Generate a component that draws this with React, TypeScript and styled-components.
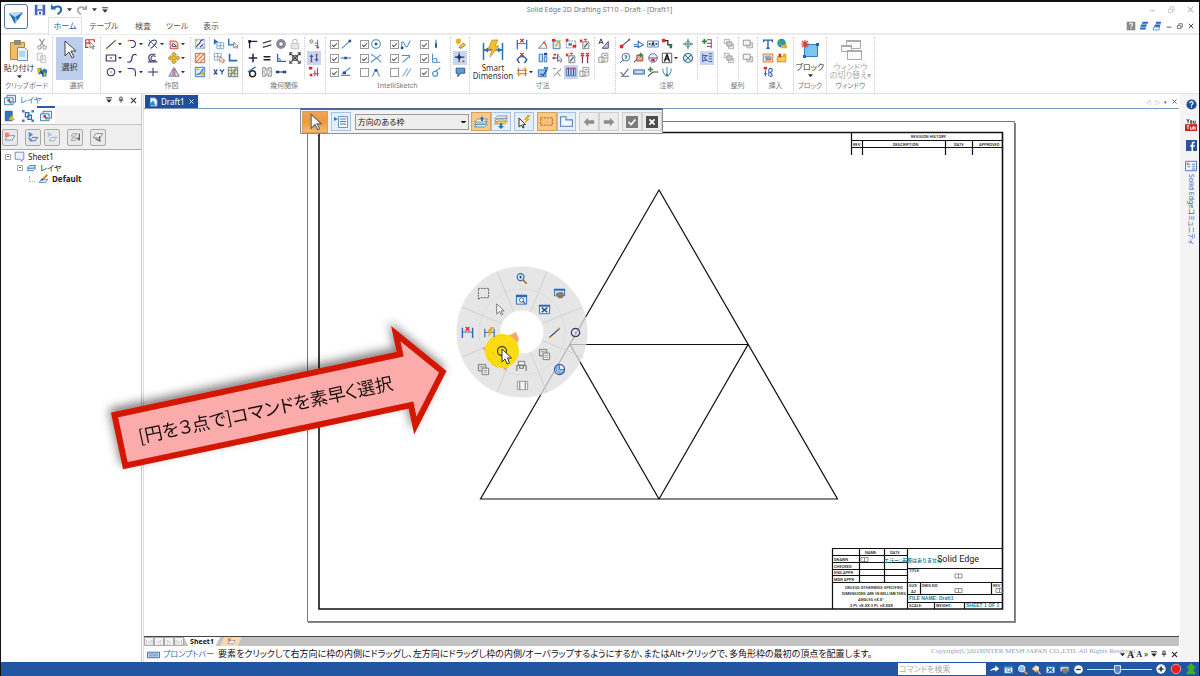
import React, { ReactNode } from "react";
import styled, { createGlobalStyle, css } from "styled-components";

const Global = createGlobalStyle`
  *, *::before, *::after { box-sizing: border-box; }
  html, body, #root { margin: 0; height: 100%; }
  body {
    font-family: "Noto Sans", "Noto Sans CJK JP", sans-serif;
    font-size: 8px;
    line-height: 12px;
    color: #333;
    background: #fff;
    font-feature-settings: "palt";
    overflow: hidden;
  }
  button, input, select { font: inherit; color: inherit; margin: 0; }
  svg { display: block; flex: none; }
`;

/* ---------- icons, all on a 14 x 14 grid ---------- */

const NAVY = "#34346e";
const BLUE = "#2a6cb8";
const RED = "#dc2b20";
const GRAY = "#9a9a9a";
const GOLD = "#e8b21c";

type LineProps = { d: string; c?: string; w?: number; f?: string };
const L = ({ d, c = NAVY, w = 1.2, f = "none" }: LineProps) => <path d={d} stroke={c} strokeWidth={w} fill={f} />;
const F = ({ d, c = NAVY }: { d: string; c?: string }) => <path d={d} fill={c} />;

const dimension = (
  <>
    <L d="M1.500 2v11M12.500 2v11" c={BLUE} w={1.5} />
    <L d="M2 6.500h10" c={BLUE} w={1} />
    <L d="M5 1l4 4M9 1L5 5" c={RED} w={1.5} />
  </>
);
const circle = <><L d="M7 2.500a4.500 4.500 0 1 0 .01 0z" /><F d="M6.200 6.200h1.600v1.600H6.200z" c="#b77" /></>;
const cursor = <path d="M4 1v11l3-3 2 4 1.500-.7L8.600 8.500H12z" fill="#fff" stroke="#666" strokeWidth=".9" />;
const fit = <><path d="M1.500 2.500h11v9h-11z" fill="#eaf4ff" stroke={BLUE} /><L d="M4 5l6 5M10 5l-6 5" c="#244f91" w={1.6} /><F d="M1 2h12v2H1z" c={BLUE} /></>;
const magnifier = <><circle cx="6" cy="5.500" r="3.700" fill="#d7ecfb" stroke={BLUE} strokeWidth="1.300" /><L d="M8.500 8.500l4 4" c="#b4762b" w={2} /><L d="M4.500 5.500h3M6 4v3" c={NAVY} w={1} /></>;
const zoomArea = <><path d="M1.500 2.500h11v9.500h-11z" fill="#d9ecfb" stroke={BLUE} /><F d="M1 2h12v2.500H1z" c={BLUE} /><circle cx="7" cy="7.500" r="2.200" fill="#fff" stroke={BLUE} /><L d="M8.600 9l2.400 2.400" c="#244f91" /></>;
const pan = <><path d="M1.500 2.500h11v7h-11z" fill="#d9ecfb" stroke={BLUE} /><F d="M1 2h12v2H1z" c={BLUE} /><F d="M4 6l6-1 2 3-2 4H6L3 8z" c="#8a7a68" /></>;
const layers = <><path d="M1.500 11l3-3.500h8l-3 3.500z" fill="#fff" stroke={BLUE} /><path d="M1.500 8l3-3.500h8l-3 3.500z" fill="#cfe3f7" stroke={BLUE} /></>;

const glyphs: Record<string, ReactNode> = {
  cut: <><L d="M4 1l5 8M10 1L5 9" c={GRAY} w={1.5} /><L d="M4 9a2 2 0 1 0 .1 0zM10 9a2 2 0 1 0 .1 0z" c={GRAY} /></>,
  copy: <><path d="M1.500 1.500h6v8h-6zM5.500 4.500h6v8h-6z" fill="#f6f6f6" stroke="#bbb" /><L d="M7 7h3M7 9h3" c="#ccc" w={1} /></>,
  formatPaint: <><F d="M2 3l4-1 1 3 3-2 3 2-1 7-4 1-2-4-3 1z" c="#2a79c4" /><F d="M1 2l4 1 1 4-4 1zM9 7l3 2-3 4z" c={GOLD} /><L d="M5 6l3 3" c="#12365f" /></>,
  selectTool: <><L d="M2 2h6M2 2v9h3M12 5V2H8M2 6h5M6 2v4" c={RED} w={1.3} /><path d="M7 5v7l2-2 1.500 3 1-.5L10 10h2.500z" fill="#fff" stroke="#555" strokeWidth=".8" /></>,
  line: <><L d="M2 12L12 3" /><F d="M1 11h2v2H1zM11 2h2v2h-2z" c="#e08a2c" /></>,
  rect: <><path d="M1.500 3.500h11v7h-11z" fill="#fff" stroke={NAVY} strokeWidth="1.300" /><F d="M6 6h2v2H6z" c={RED} /></>,
  circle,
  arc: <><L d="M4 3h3a4 4 0 0 1 0 8H6" /><F d="M2 2h2v2H2z" c="#e08a2c" /></>,
  curve: <L d="M2 11c0 2 5 1 5-4S12 2 12 4" w={1.4} />,
  fillet: <><L d="M2 3h9v9" c="#a9a9c4" w={1} /><L d="M2 3h4a5 5 0 0 1 5 5v4" /></>,
  trim: <><L d="M2 10c0-8 9-9 9-6s-6 8-7 8" /><L d="M2 2l10 10" c={RED} w={1} /></>,
  offset: <><L d="M12 11.500H1" w={1.4} /><L d="M5 11a4.500 4.500 0 0 1 0-8.500h5M10 9a3 3 0 1 1 0-3.500" w={1.2} /></>,
  cross: <L d="M7 2v10M1 7h12" />,
  scale: <><path d="M2.500 12.500v-9h5a4 4 0 0 1 4 5v4z" fill="#fbd6d0" stroke={RED} /><path d="M5 10V7h2l3 3z" fill="#fff" stroke={NAVY} /></>,
  move: <path d="M7 0l3 3H8.500v2.500H11V4l3 3-3 3V8.500H8.500V11H10l-3 3-3-3h1.500V8.500H3V10L0 7l3-3v1.500h2.500V3H4z" fill="#e5b92c" stroke="#8e6c18" strokeWidth=".6" />,
  mirror: <><path d="M6 3v9H1z" fill="#b6cdf0" stroke="#4b69a8" strokeWidth=".8" /><path d="M8 3v9h5z" fill="#dcdcec" stroke="#4b4b80" strokeWidth=".8" /><L d="M7 1v12" c={RED} w={0.8} /></>,
  distribute: <><path d="M1.500 1.500h11v11h-11z" fill="#e6effa" stroke="#8fb1d9" /><L d="M3 11c0-5 3-2 4-6s3-2 4-3M7 11l4-4" /><F d="M2 2h2v2H2zM10 10h2v2h-2z" c={GOLD} /></>,
  hatch: <><path d="M1.500 1.500h11v11h-11z" fill="#ffe7d6" stroke="#97624a" /><L d="M2 7l5-5M2 12L12 2M7 12l5-5" c="#e0704a" /></>,
  tilePaint: <><path d="M1.500 1.500h11v11h-11z" fill="#dcefff" stroke={BLUE} /><L d="M3 10l4-1 4-6" w={1.6} c="#2a79c4" /><F d="M8 7l4-1v5H8zM3 3h3v2H3z" c={GOLD} /></>,
  gridPlay: <><F d="M1 1l5 3.500L1 8z" c={BLUE} /><L d="M4.500 5.500h8v7h-8zM8.500 5.500v7M4.500 9h8" c="#6f9dd4" w={1} /></>,
  gridPick: <><L d="M1.500 1.500h8v8h-8zM5.500 1.500v8M1.500 5.500h8" c="#8d9cb8" w={1} /><path d="M8 6v6l2-2 1 3 2-1-1-2h2z" fill="#fff" stroke="#b06040" strokeWidth=".8" /></>,
  xy: <L d="M1 4l4 6M5 4l-4 6M8 4l2.500 3L13 4M10.500 7v3" c="#2c4f9e" w={1.4} />,
  snapPick: <><L d="M2 1v7h6" c={BLUE} w={1.6} /><path d="M8 5v7l2-2 1 2 1.500-.6L11.500 9.500H13z" fill="#fff" stroke="#555" strokeWidth=".8" /></>,
  corner: <L d="M3 2v8h9" c={BLUE} w={2} />,
  gridEdit: <><path d="M1.500 1.500h11v11h-11z" fill="#f7f0c8" stroke="#4a628b" /><L d="M5 2v10M9 2v10M2 5h10M2 9h10" c="#5f83b5" w={1} /><L d="M4 11l7-8" c="#b98a28" w={1.6} /></>,
  connect: <><L d="M3 12V4h9" c="#24244a" w={1.5} /><F d="M1.500 2.500h3v3h-3z" c="#111" /></>,
  parallel: <L d="M2 6l10-3M2 11l10-3" c="#444" w={1.5} />,
  ring: <><circle cx="7" cy="7" r="4.200" fill="none" stroke="#8b8ba0" strokeWidth="3" /><circle cx="7" cy="7" r="2.600" fill="none" stroke="#55556f" strokeWidth=".8" /></>,
  lock: <><path d="M2.500 6.500h9v6h-9z" fill="#e9e9e9" stroke="#bbb" /><L d="M4.500 6V4a2.500 2.500 0 0 1 5 0v2" c="#bbb" /></>,
  plus: <L d="M7 2v10M2 7h10" w={1.8} c="#24244a" />,
  equal: <L d="M3 5.500h8M3 9h8" w={1.8} c="#222" />,
  perp: <><L d="M3 2v9h10" c={BLUE} w={1.5} /><L d="M3 8h3v3" c={BLUE} w={1} /></>,
  rigid: <><path d="M4 4h6v6H4z" fill="#aaa" stroke="#555" /><L d="M1 1l12 12M13 1L1 13M1 4V1h3M10 1h3v3M1 10v3h3M10 13h3v-3" c="#444" /></>,
  tangent: <><circle cx="6.500" cy="9" r="3.500" fill="none" stroke="#222" strokeWidth="1.700" /><L d="M1 7l9-6" c={BLUE} w={1.5} /></>,
  symmetric: <><L d="M2 2h3v3L3 7l2 2v3H2zM12 2H9v3l2 2-2 2v3h3z" c="#777" w={1} /><L d="M7 2v10" c="#777" w={1} /></>,
  colinear: <><F d="M1 5.500h4v3H1zM9 5.500h4v3H9z" c="#223a86" /><L d="M1 7h12" c="#223a86" /></>,
  relate1: <><circle cx="4" cy="4" r="2" fill="#eed46a" stroke="#888" /><L d="M8 9h4M8 6h4M11 2v10" c={BLUE} w={1} /><F d="M10 10h3v2h-3z" c={RED} /></>,
  relate2: <><L d="M4 3v8M10 3v8M2 5h4M8 9h4" c="#5b4f9c" w={1.4} /><F d="M3 10h2v2H3zM9 2h2v2H9z" c={RED} /></>,
  relate3: <><F d="M1 1h4v3H1zM2 9h3v3H2z" c={RED} /><L d="M8 5v7M11 2v10M6 9h7" c="#b04a74" w={1.3} /></>,
  sLine: <><L d="M2 12l9-8" c="#4c8bd0" /><F d="M10 2h3v3h-3z" c="#244f91" /></>,
  sMid: <><L d="M1 7h12" c="#4c8bd0" w={1.5} /><F d="M5 5.500h3v3H5z" c="#244f91" /></>,
  sPoint: <><L d="M1 11h11M4 8l8-6" c="#4c8bd0" w={1.3} /><F d="M3 6.500h4v3H3z" c="#244f91" /></>,
  sCenter: <><circle cx="7" cy="7" r="5" fill="none" stroke="#3e86c8" strokeWidth="1.200" /><F d="M5.500 5.500h3v3h-3z" c="#244f91" /></>,
  sInter: <L d="M1 3c4 1 7 4 12 9M1 12l12-9" c="#4c8bd0" />,
  sPeak: <><L d="M2 12c3 0 2-7 5-7s2 7 5 7" c="#4c8bd0" /><F d="M5.500 3.500h3v3h-3z" c="#244f91" /></>,
  sSpline: <><L d="M2 12V5c3-3 4 9 7 4l3-6" c="#4c8bd0" /><F d="M1 10h3v3H1z" c="#244f91" /></>,
  sExtend: <L d="M3 12l8-7M2 4h9v3" c="#4c8bd0" />,
  sParallel: <L d="M3 12l6-9M7 12l6-9" c="#7f9fc5" />,
  sHV: <><L d="M7 2v10" c="#4c8bd0" w={1.5} /><F d="M6 6h2v5H6z" c="#244f91" /></>,
  sPerp: <L d="M3 2v10h9M3 8h5v4" c="#4c8bd0" />,
  sTangent: <><circle cx="6" cy="9" r="3" fill="none" stroke="#3e86c8" strokeWidth="1.200" /><L d="M7 6l5-4" c="#3e86c8" /></>,
  bulb: <><F d="M3 1h5v4L5 8 2 5z" c={GOLD} /><L d="M6 11l5-5 2 2-5 4z" c="#b08b22" f="#f2d670" /></>,
  snap: <><L d="M6 1v11M1 6h11" c="#223a66" w={1.3} /><F d="M6 3l3 3-3 3-3-3z" c="#223a66" /><F d="M10 10h2v2h-2z" c={RED} /></>,
  flag: <><path d="M2.500 2.500h10v6h-5l-3 4v-4h-2z" fill="#5f9ad4" stroke="#224f85" /></>,
  dimension,
  arcDim: <><L d="M2 9c1-5 9-5 10 0" c={BLUE} w={1.5} /><L d="M5 1l4 4M9 1L5 5" c={RED} w={1.5} /><L d="M1 8l3 5M13 8l-3 5" c="#244f91" w={1.5} /></>,
  gridDim: <><L d="M3 2v10M11 2v10M1 5h12M1 9h12" c="#b56a45" /><F d="M2 8h3v3H2zM9 2h3v3H9z" c={GOLD} /></>,
  angle: <><L d="M12 12H2l8-9" c="#8994b5" /><L d="M7 5c3 1 4 4 4 6" c={RED} /></>,
  ruler: <><path d="M2.500 2.500h4v9h-4zM8.500 5.500h3v6h-3z" fill="#c6ddf4" stroke={BLUE} /><F d="M8 1h4v3H8z" c="#244f91" /></>,
  noteDim: <><path d="M2.500 3.500h6l2 2v7h-8z" fill="#dcecf9" stroke={BLUE} /><L d="M5 10l6-8" c={GOLD} w={1.8} /><F d="M1 1h4v3H1z" c={RED} /></>,
  paintDim: <><path d="M1.500 4.500h9v8h-9z" fill="#9cc8ee" stroke={BLUE} /><L d="M4 9l3 2 5-7" c="#244f91" w={1.5} /><F d="M8 1h5v3H8z" c="#4b8bd0" /></>,
  dimPick: <><F d="M1 7l3-2v4zM3 2h3v2H3z" c={RED} /><L d="M3 7h5M8 2v9" c="#244f91" /><path d="M8 4v7l2-2 1 3 1.500-.7L11.500 9H13z" fill="#fff" stroke="#555" strokeWidth=".8" /></>,
  dimGray: <L d="M2 3h4M3 12l9-9M8 8l3 4" c="#999" />,
  frame: <><path d="M1.500 3.500h11v8h-11z" fill="none" stroke="#5377ad" strokeDasharray="2 1" /><F d="M1 1h3v3H1zM9 8h4v3H9z" c={RED} /><F d="M4 6h4v3H4z" c="#5377ad" /></>,
  stamp: <><path d="M4.500 4.500h7v8h-7z" fill="#eee" stroke="#7a7a7a" /><L d="M1 2l3 3M4 2L1 5M6 1l3 3M9 1L6 4" c={RED} /><L d="M6 11l4-5" c="#244f91" /></>,
  bars: <><path d="M1.500 2.500h11v9h-11z" fill="#bcd3f2" stroke="#4a72ad" /><L d="M4 3v8M7 3v8M10 3v8" c="#2f4f91" /><F d="M3 2h2v2H3zM9 2h2v2H9z" c={RED} /></>,
  pair: <><L d="M4 5v8M10 5v8" c="#7b3f5c" w={1.5} /><L d="M2 1l4 4M6 1L2 5M8 1l4 4M12 1L8 5" c={RED} w={1.4} /></>,
  sheetGray: <><path d="M4.500 1.500h7v10h-7z" fill="#f3f3f3" stroke="#999" /><L d="M1 6h6v6H1zM7 4h3M8 7h3" c="#888" w={1} /></>,
  textA: <><L d="M1 7l2.500-6L6 7M2 5h3" c="#222" w={1} /><path d="M12 4v8H5z" fill="#c5cbe2" stroke={NAVY} /></>,
  leader: <><L d="M4 9l8-7" c="#2e4f8c" /><F d="M1 8h4v4H1zM11 1h2v2h-2z" c={RED} /></>,
  weld: <L d="M1 10h5M6 3v9M6 4l6 4-6 3M1 8h4" c={BLUE} />,
  fcf: <><path d="M.5 3.500h13v7H.5z" fill="#e7f1fb" stroke="#4d7cb7" /><L d="M2 7h2M10 7h2" c="#222" w={1.5} /><L d="M5.500 9l1.500-4 1.500 4" c="#222" /></>,
  datum: <><L d="M3 3h5v5h5" c="#222" w={1.4} /><F d="M1 1h4v4H1z" c={RED} /><F d="M10 7h3v5h-3z" c="#247a40" /></>,
  balloon: <><circle cx="8" cy="6" r="4.600" fill="#eef5fc" stroke="#3f6398" /><L d="M5 9l-4 4M6.500 4.500h2.500v2H8v2" c="#3f6398" w={1.1} /></>,
  callout: <><L d="M1 12l5-5" c="#555" /><path d="M4.500 3.500h7v7h-7z" fill="#f3a894" stroke="#8c3a30" /><L d="M9 1v5M6.500 3.500h5" c="#2f8c46" w={1.8} /></>,
  datumTarget: <><circle cx="7" cy="7" r="5" fill="#eef0fa" stroke="#5160a0" /><L d="M2 7h10" c="#5160a0" /><F d="M5 8h4v3H5z" c={RED} /></>,
  bigA: <><path d="M1.500 1.500h11v11h-11z" fill="#fff" stroke="#444" /><L d="M4 11l3-8 3 8M5 8h4" c="#111" w={1.7} /></>,
  surface: <L d="M2 7l3 4 6-8M2 12h10" c="#54698c" />,
  label: <><path d="M.5 4.500h13v5H.5z" fill="#92b8e3" stroke="#3f6ba8" /><L d="M3 7h8" c="#fff" /></>,
  edge: <><L d="M1 12l6-5h6" c="#444" /><L d="M4 1v6M1 4h6" c="#2f8c46" w={1.8} /></>,
  drop: <><L d="M2 3c0 5 3 8 5 9 2-1 5-4 5-9M7 1v11" c="#4a90b8" /><F d="M6 9h2v3H6z" c="#2f8c46" /></>,
  center: <><L d="M7 1v12M1 7h12" c="#3a8a78" /><path d="M7 3l4 4-4 4-4-4z" fill="none" stroke="#46568c" /></>,
  bolt: <><circle cx="7" cy="7" r="5.300" fill="#e4f4f8" stroke="#3b6d8c" strokeWidth="1.300" /><L d="M3.500 3.500l7 7M10.500 3.500l-7 7" c="#3b6d8c" /></>,
  stackAdd: <><L d="M7 2h5v10M7 6h5M7 10h5" c="#874a78" /><L d="M4 1v6M1 4h6" c="#2f8c46" w={2} /></>,
  stack: <L d="M2 2v10M2 4h5l-3 3 3 3H2M9 2h4M9 5h4M9 8h4M9 11h4" c="#4863a4" />,
  front: <><path d="M6.500 7.500h6v5h-6zM1.500 1.500h6v5h-6z" fill="#eee" stroke="#aaa" /><path d="M4.500 4.500h6v5h-6z" fill="#ccc" stroke="#999" /></>,
  back: <><path d="M5.500 5.500h7v6h-7z" fill="#ddd" stroke="#aaa" /><path d="M1.500 2.500h8v6h-8z" fill="#f4f4f4" stroke="#888" /></>,
  bigT: <L d="M2 5V2.500h10V5M7 3v9M5 12h4" c="#1f5fae" w={1.6} />,
  globe: <><circle cx="6.500" cy="6" r="5" fill="#2f8fc8" /><F d="M3 2l3 1 1 4-4 2zM9 3l2 2-1 3z" c="#4aa546" /><F d="M6 8h7v4H6z" c={GOLD} /></>,
  picture: <><path d="M1.500 2.500h11v9h-11z" fill="#fff" stroke="#e48e52" strokeWidth="1.500" /><F d="M3 4h8v4H3z" c="#6fb6e8" /><F d="M3 10l3-3 2 1 3-1v3z" c="#d8684a" /></>,
  folder: <><path d="M1.500 5.500h10v6h-10z" fill="#f4cf5e" stroke="#b68c20" /><F d="M3 2h3v4H3z" c={RED} /><F d="M8 2h4v4H8z" c={GOLD} /></>,
  symbol: <><F d="M2 1h4v3H2z" c={RED} /><L d="M4 5v7M2 9h4M8 12V5c0-3 4-3 4 0s-4 2-2 3 3 5-1 4" c="#2f66ac" w={1.3} /></>,
  save: <><path d="M1.500 1.500h11v11h-11z" fill="#4a6fc4" stroke="#24469b" /><F d="M4 1h6v5H4zM4 8h6v5H4z" c="#eef3fc" /><F d="M6 9h2v3H6z" c="#24469b" /></>,
  undo: <><L d="M3 6c4-4 9-2 9 1s-2 4-4 5" c="#1f6cc0" w={2.2} /><F d="M1 1l6 6H1z" c="#1f6cc0" /></>,
  redo: <><L d="M11 6C7 2 2 4 2 7s2 4 4 5" c="#aaa" w={2} /><F d="M13 1v6H7z" c="#aaa" /></>,
  help: <><path d="M1 1h12v12H1z" fill="#8a8a8a" /><L d="M5 5c0-3 4-3 4 0 0 2-2 1-2 3M7 9.500v1.500" c="#fff" w={1.6} /></>,
  helpRound: <><circle cx="7" cy="7" r="6.500" fill="#1d4f9e" /><L d="M5 5.500c0-3 4-3 4 0C9 7 7 6.500 7 8.500M7 9.500V11" c="#fff" w={1.6} /></>,
  cascade: <path d="M5 1h8l-1 3H4zM3 5h8l-1 3H2zM2 9h8l-1 3H1z" fill="#1e66c8" />,
  cascadeBack: <><path d="M6 1h7l-1 3H5zM4 5h8l-1 3H3z" fill="#1e66c8" /><path d="M2.500 8.500h8l-1 4h-8z" fill="#fff" stroke="#1e66c8" /></>,
  minimize: <L d="M3 9h8" c="currentColor" w={1.5} />,
  restore: <L d="M2.500 6.500h6v5h-6zM5 6V3h6v6H9" c="currentColor" w={1.2} />,
  close: <L d="M3 3l8 8M11 3l-8 8" c="currentColor" w={1.7} />,
  pin: <L d="M5 2h4v5H5zM3 7.500h8M7 8v4" c="currentColor" w={1.4} />,
  drop1: <path d="M2 2h10v2H2zM2 6h10l-5 6z" fill="currentColor" />,
  layerBox: <><path d="M3.500 1.500h10v8h-10z" fill="#dff0ff" stroke={BLUE} /><path d="M.5 4.500h10v8H.5z" fill="#eef6ff" stroke={BLUE} /><F d="M4 6h3v3H4z" c={RED} /><F d="M6 8h3v3H6z" c="#3b9c68" /></>,
  book: <><path d="M1.500 1.500h8v11h-8z" fill="#3671bd" stroke="#24509a" /><F d="M6 10l3-4 4 6H6z" c={GOLD} /></>,
  family: <><L d="M4 3h4v5H4zM7 6h4v5H7z" c={BLUE} w={1.5} /><F d="M0 0h3v3H0zM11 0h3v3h-3zM0 11h3v3H0zM11 11h3v3h-3z" c="#5b7cae" /></>,
  layers,
  layerNew: <><path d="M1.500 10.500l3-5h8l-3 5z" fill="#fff" stroke="#5c80bb" /><F d="M1 2h5v5H1z" c="#ee8176" /></>,
  layerOn: <><path d="M3.500 11.500l3-4h6l-3 4z" fill="#dfe8ff" stroke="#4a60b0" /><F d="M2 1l5 3-5 4z" c="#4a8fd0" /><L d="M2 8l3 4" c="#4a60b0" /></>,
  layerOff: <><path d="M3.500 11.500l3-4h6l-3 4z" fill="#eee" stroke="#9aa4c8" /><F d="M2 1l5 3-5 4z" c="#abc4de" /></>,
  layerMove: <><path d="M2.500 6l2-3h5l-2 3zM2.500 11l2-3h5l-2 3z" fill="#eee" stroke="#999" /><L d="M12 3v7M10 8l2 3" c="#444" /></>,
  layerPick: <><path d="M1.500 8l3-5h8l-3 5z" fill="#eee" stroke="#888" /><L d="M4 9l6 3M9 6v6" c="#555" /></>,
  sheet: <path d="M1.500 1.500h11v9h-2v3l-3-3h-6z" fill="#eef2ff" stroke="#5272b8" />,
  pencilLayer: <><path d="M1.500 12l3-4h8l-3 4z" fill="#e3eeff" stroke="#4a6fb5" /><L d="M6 8l6-6" c="#c98a2b" w={2.4} /><F d="M4 10l1-3 2 2z" c="#222" /></>,
  docIcon: <><path d="M3.500 1.500h6l3 3v8h-9z" fill="#f0f6ff" stroke="#b8d1ee" /><F d="M1 12l6-7 4 7z" c="#2a86cc" /></>,
  youtube: <><path d="M0 6h14v8H0z" fill="#c8231d" /><L d="M2 0l1.500 2.500L5 0M3.500 2v3M6.500 2h1.500v3H6.500zM10 2v3h2V2" c="#333" w={1} /><L d="M2 8h3M3.500 8v4M6.500 9v3h2V9M10 8v4h2V9.500h-2" c="#fff" w={1} /></>,
  facebook: <><path d="M0 0h14v14H0z" fill="#2b5597" /><L d="M11 3H9.500C8 3 8 4 8 5.500V14M5.500 7.500H11" c="#fff" w={2} /></>,
  community: <><path d="M.5 1.500h13v11H.5z" fill="#f4f8fd" stroke="#3a66ad" /><L d="M3 5h3M3 8h3M8 5h4M8 8h4M8 10.500h4" c="#5580bf" /><F d="M2 3h2v3H2z" c="#e87b3a" /></>,
  keyboard: <><path d="M.5 4.500h13v6H.5z" fill="#cfe0f5" stroke="#3b69b0" /><L d="M2 6.500h10M2 8.500h10" c="#3b69b0" w={0.8} /></>,
  cursor,
  listPanel: <><path d="M4.500 1.500h9v11h-9z" fill="#f5faff" stroke="#6c94c4" /><L d="M6 4h6M6 6.500h6M6 9h6" c="#4579bb" w={1} /><F d="M0 2l4 2-4 2z" c="#2f74c0" /></>,
  layerUp: <><path d="M.5 12l3-3h10l-3 3zM.5 9.500l3-3h10l-3 3z" fill="#d8ecf8" stroke="#4d88a8" strokeWidth=".8" /><path d="M.5 7l3-3h10l-3 3z" fill="#fff3bf" stroke="#4d88a8" strokeWidth=".8" /><F d="M8 1l2 3H9v2H7V4H6z" c="#1e77bd" /></>,
  layerDown: <><path d="M.5 4l3-3h10l-3 3zM.5 6.500l3-3h10l-3 3z" fill="#eee" stroke="#6d8ba0" strokeWidth=".8" /><path d="M.5 9l3-3h10l-3 3z" fill="#f3ce60" stroke="#a88a38" strokeWidth=".8" /><F d="M7 14l3-3H8V8H6v3H4z" c="#1e77bd" /></>,
  flash: <><path d="M2 3v9l2.500-2L6 13l1-.5L6 9.500h2.500z" fill="#fff" stroke="#333" /><F d="M10 0h4l-3 4h2L7 9l2-4H7z" c={GOLD} /></>,
  fenceRect: <path d="M1.500 3.500h11v7h-11z" fill="#f6c07c" stroke="#b06a28" strokeDasharray="2 1" />,
  fencePoly: <path d="M1.500 2.500h5v3h6v6h-11z" fill="#f4f9ff" stroke="#4d7fb8" />,
  left: <F d="M1 7l5-5v3h7v4H6v3z" c="#8c8c8c" />,
  right: <F d="M13 7L8 2v3H1v4h7v3z" c="#8c8c8c" />,
  accept: <><path d="M0 0h14v14H0z" fill="#7c7c7c" /><L d="M3 7l3 3 5-6" c="#fff" w={2} /></>,
  cancel: <><path d="M0 0h14v14H0z" fill="#4c4c4c" /><L d="M4 4l6 6M10 4l-6 6" c="#fff" w={2} /></>,
  go: <F d="M1 9c2-3 4-4 7-4V2l5 4-5 4V7.500C5 7.500 3 8 1 9z" c="#fff" />,
  magnifier, zoomArea, fit, pan,
  barMagnifier: <><circle cx="6" cy="6" r="4" fill="#8fc0ee" stroke="#e3f0fc" strokeWidth="1.300" /><L d="M9 9l4 4" c="#e0a050" w={2.2} /></>,
  zoomBack: <><F d="M1 6l6-5v10z" c="#f4d88a" /><L d="M8 8l4 5" c="#e7b25a" w={2} /><F d="M6 3h4v5H6z" c="#f8eec8" /></>,
  minus: <><circle cx="7" cy="7" r="5.500" fill="#fff" /><L d="M4 7h6" c="#234" w={1.8} /></>,
  add: <><circle cx="7" cy="7" r="5.500" fill="#fff" /><L d="M4 7h6M7 4v6" c="#234" w={1.8} /></>,
  record: <circle cx="7" cy="7" r="5.500" fill="#e3221b" stroke="#f6b0a8" />,
  upload: <F d="M7 0l6 6h-3v4h2v3H2v-3h2V6H1z" c="#3fae2b" />,
  fence: <path d="M1.500 1.500h11v10h-9l-2 2z" fill="none" stroke="#555" strokeDasharray="2 1" />,
  film: <><path d="M1.500 2.500h11v9h-11z" fill="#f3f3f3" stroke="#999" /><L d="M4 3v8M10 3v8" c="#888" /></>,
  flashDim: <><L d="M2 3v9M12 3v9M2 7h10" c={BLUE} /><F d="M8 1h4L9 6h2l-6 6 2-5H4z" c={GOLD} /></>,
  pie: <><circle cx="7" cy="7" r="5.500" fill="#e9f2ff" stroke="#4252a4" strokeWidth="1.200" /><path d="M3 3h4v4h5c0 6-10 6-9-4z" fill="#94c4ec" stroke="#3676b8" /></>,
  grayCopy: <><path d="M1.500 1.500h8v7h-8z" fill="#ddd" stroke="#777" /><path d="M5.500 5.500h7v7h-7z" fill="#f3f3f3" stroke="#777" /><L d="M3 4h5M7 8h4M7 10h4" c="#999" w={1} /></>,
  grayPart: <><path d="M3.500 2.500h7v4h-7z" fill="#eee" stroke="#777" /><L d="M2 13V7h10v6M5 7v3h4V7" c="#777" /></>,
};

const Icon = ({ name, size = 12 }: { name: string; size?: number }) => (
  <svg width={size} height={size} viewBox="0 0 14 14" aria-hidden="true">
    {glyphs[name]}
  </svg>
);

/* ---------- frame ---------- */

const Shell = styled.div`
  display: flex;
  flex-direction: column;
  min-height: 100vh;
  border: solid #111;
  border-width: 2px 1px 0;
  position: relative;
`;
const Header = styled.header`
  display: flex;
  height: 33px;
  padding-left: 3px;
  border-bottom: 2px solid #ebebeb;
`;
const plain = css`
  border: 0;
  padding: 0;
  background: none;
  display: flex;
  align-items: center;
  justify-content: center;
`;
const AppButton = styled.button`
  ${plain}
  width: 24px;
  height: 25px;
  margin-top: 2px;
  border: 1px solid #5c7196;
  border-radius: 3px;
  background: #fff;
`;
const HeaderRows = styled.div`
  flex: 1;
  display: grid;
  grid-template-rows: 15px 17px;
`;
const TitleRow = styled.div`
  display: grid;
  grid-template-columns: 1fr auto 1fr;
  align-items: center;
`;
const QuickAccess = styled.div`
  display: flex;
  align-items: center;
  gap: 4px;
  padding-left: 6px;
  color: #333;
`;
const Title = styled.h1`
  margin: 0 28px 0 0;
  font-size: 7px;
  line-height: 15px;
  font-weight: 400;
  color: #777;
`;
const WindowButtons = styled.div<{ $faint?: boolean }>`
  display: flex;
  align-self: center;
  justify-content: flex-end;
  gap: ${(p) => (p.$faint ? 10 : 3)}px;
  padding-right: 4px;
  color: ${(p) => (p.$faint ? "#bbb" : "#444")};
`;
const Bare = styled.button`
  ${plain}
`;
const TabRow = styled.div`
  display: flex;
  justify-content: space-between;
  align-items: flex-end;
`;
const Tabs = styled.nav`
  display: flex;
  padding-left: 20px;
`;
const Tab = styled.button<{ $on?: boolean; $wide?: boolean }>`
  ${plain}
  height: 17px;
  width: ${(p) => (p.$wide ? 44 : 34)}px;
  color: ${(p) => (p.$on ? "#2458a6" : "#555")};
  border: 1px solid ${(p) => (p.$on ? "#ddd" : "transparent")};
  border-bottom: 0;
  background: #fff;
  white-space: nowrap;
`;

/* ---------- ribbon ---------- */

const Ribbon = styled.section`
  display: flex;
  height: 59px;
  padding-top: 2px;
  border-bottom: 1px solid #e2e2e2;
`;
const GroupBox = styled.div<{ $w: number }>`
  width: ${(p) => p.$w}px;
  flex: none;
  display: grid;
  grid-template-rows: 43px 13px;
  border-right: 1px dotted #ccc;
`;
const GroupBody = styled.div<{ $pad: number }>`
  display: flex;
  padding-left: ${(p) => p.$pad}px;
`;
const Caption = styled.div`
  text-align: center;
  font-size: 7px;
  line-height: 11px;
  color: #777;
  white-space: nowrap;
`;
const Column = styled.div`
  display: grid;
  grid-template-rows: repeat(3, 14px);
  align-content: start;
`;
const Tool = styled.button<{ $on?: boolean; $split?: boolean }>`
  ${plain}
  justify-content: flex-start;
  width: ${(p) => (p.$split ? 21 : 14)}px;
  height: 14px;
  padding-left: 1px;
  gap: 1px;
  background: ${(p) => (p.$on ? "#c8d6f2" : "transparent")};
`;
const Sep = styled.div`
  width: 0;
  height: 42px;
  margin: 0 2px;
  border-left: 1px dotted #ccc;
`;
const BigButton = styled.button<{ $w: number; $on?: boolean; $off?: boolean }>`
  ${plain}
  flex-direction: column;
  justify-content: flex-start;
  width: ${(p) => p.$w}px;
  height: 43px;
  gap: 2px;
  padding-top: 2px;
  line-height: 8px;
  white-space: nowrap;
  color: ${(p) => (p.$off ? "#aaa" : "#333")};
  background: ${(p) => (p.$on ? "#bccdee" : "transparent")};
`;
const CheckGrid = styled.div`
  display: grid;
  grid-template-columns: repeat(3, 30px) 28px;
  grid-template-rows: repeat(3, 14px);
`;
const CheckLabel = styled.label`
  display: flex;
  align-items: center;
  gap: 1px;
`;
const Check = styled.input`
  appearance: none;
  width: 9px;
  height: 9px;
  border: 1px solid #999;
  background: #fff;
  display: grid;
  place-items: center;
  &:checked::after {
    content: "";
    width: 5px;
    height: 3px;
    border: solid #555;
    border-width: 0 0 1px 1px;
    transform: rotate(-45deg);
  }
`;

const Arrow = ({ size = 5 }: { size?: number }) => (
  <svg width={size} height={size} viewBox="0 0 6 6" aria-hidden="true"><path d="M0 1.500h6L3 5z" fill="currentColor" /></svg>
);

/* A trailing "v" marks a split button, a trailing "*" a pressed one. */
const Tools = ({ items }: { items: string[] }) => (
  <Column>
    {items.map((item, i) => {
      const name = item.replace(/[v*]$/, "");
      const split = item.endsWith("v") && name !== "mo";
      return item ? (
        <Tool key={i} $split={split} $on={item.endsWith("*")} aria-label={name}>
          <Icon name={name} />
          {split && <Arrow size={4} />}
        </Tool>
      ) : <span key={i} />;
    })}
  </Column>
);

const Group = ({ title, w, pad = 3, children }: { title: string; w: number; pad?: number; children: ReactNode }) => (
  <GroupBox $w={w}>
    <GroupBody $pad={pad}>{children}</GroupBody>
    <Caption>{title}</Caption>
  </GroupBox>
);

const sketchOptions: [string, boolean][] = [
  ["sLine", true], ["sCenter", true], ["sSpline", true], ["sHV", true],
  ["sMid", true], ["sInter", true], ["sExtend", true], ["sPerp", true],
  ["sPoint", true], ["sPeak", false], ["sParallel", false], ["sTangent", true],
];

const RibbonBar = () => (
  <Ribbon>
    <Group title="クリップボード" w={52} pad={2}>
      <BigButton $w={32}>
        <svg width="20" height="23" viewBox="0 0 20 23">
          <path d="M1.500 3.500h14v17h-14z" fill="#efc063" stroke="#b98530" />
          <path d="M5 1h7v5H5z" fill="#8f8a80" />
          <path d="M8.500 8.500h7l3 3v10h-10z" fill="#e6f2ff" stroke="#5d93cd" />
          <path d="M10 13h6M10 15h6M10 17h6" stroke="#86b4e2" />
        </svg>
        貼り付け
        <Arrow />
      </BigButton>
      <Tools items={["cut", "copy", "formatPaint"]} />
    </Group>
    <Group title="選択" w={48}>
      <BigButton $w={27} $on>
        <svg width="16" height="22" viewBox="0 0 16 22"><path d="M3 2v15l4-4 3 6 2-1-3-6h5z" fill="#fff" stroke="#444" /></svg>
        選択
      </BigButton>
      <Tools items={["selectTool"]} />
    </Group>
    <Group title="作図" w={142}>
      <Tools items={["linev", "rectv", "circlev"]} />
      <Tools items={["arcv", "curve", "filletv"]} />
      <Tools items={["trimv", "offset", "cross"]} />
      <Tools items={["scalev", "movev", "mirrorv"]} />
      <Sep />
      <Tools items={["distribute", "hatch", "tilePaint"]} />
      <Sep />
      <Tools items={["gridPlay", "gridPick", "xy"]} />
      <Tools items={["snapPick", "corner", "gridEdit"]} />
    </Group>
    <Group title="幾何関係" w={83}>
      <Tools items={["connect", "plus", "tangent"]} />
      <Tools items={["parallel", "equal", "symmetric"]} />
      <Tools items={["ring", "perp", "colinear"]} />
      <Tools items={["lock", "rigid"]} />
      <Sep />
      <Tools items={["relate1", "relate2*", "relate3"]} />
    </Group>
    <Group title="IntelliSketch" w={144} pad={4}>
      <CheckGrid>
        {sketchOptions.map(([name, on]) => (
          <CheckLabel key={name}>
            <Check type="checkbox" defaultChecked={on} aria-label={name} />
            <Icon name={name} />
          </CheckLabel>
        ))}
      </CheckGrid>
      <Sep />
      <Tools items={["bulb", "snap*", "flag"]} />
    </Group>
    <Group title="寸法" w={146} pad={1}>
      <BigButton $w={44}>
        <svg width="22" height="23" viewBox="0 0 22 23">
          <path d="M1.500 4v17M20.500 4v17M2 11h18" stroke="#2f6fb2" strokeWidth="1.500" />
          <path d="M2 11l4-2.500v5zM20 11l-4-2.500v5z" fill="#2f6fb2" />
          <path d="M10 1h6l-3 6h4L8 18l2-8H6z" fill="#f6bd2e" stroke="#c28a1a" strokeWidth=".7" />
        </svg>
        <span>Smart<br />Dimension</span>
      </BigButton>
      <Tools items={["dimension", "arcDim", "gridDimv"]} />
      <Tools items={["angle", "ruler", "paintDim"]} />
      <Tools items={["noteDim", "dimPick", "dimGray"]} />
      <Tools items={["frame", "stamp", "bars*"]} />
      <Tools items={["stamp", "pair", "sheetGray"]} />
      <Sep />
      <Tools items={["textA", "sheetGray"]} />
    </Group>
    <Group title="注釈" w={102} pad={2}>
      <Tools items={["leader", "balloon", "surface"]} />
      <Tools items={["weld", "callout", "label"]} />
      <Tools items={["fcf", "datumTarget", "edge"]} />
      <Tools items={["datum", "bigAv", "drop"]} />
      <Tools items={["center", "bolt"]} />
      <Sep />
      <Tools items={["stackAdd", "stack*"]} />
    </Group>
    <Group title="整列" w={40} pad={4}>
      <Tools items={["front", "front"]} />
      <Sep />
      <Tools items={["back", "back"]} />
    </Group>
    <Group title="挿入" w={36}>
      <Tools items={["bigT", "picture", "symbol"]} />
      <Tools items={["globe", "folder"]} />
    </Group>
    <Group title="ブロック" w={33} pad={0}>
      <BigButton $w={32}>
        <svg width="20" height="22" viewBox="0 0 20 22">
          <path d="M4.500 5.500h13v12h-13z" fill="#7cc4f2" stroke="#2f7fc0" />
          <path d="M3 16h3v3H3zM16 4h3v3h-3z" fill="#2c60a0" />
          <path d="M5 1v8M1 5h8M2 2l6 6M8 2L2 8" stroke="#e23a2e" strokeWidth="1.200" />
        </svg>
        ブロック
        <Arrow />
      </BigButton>
    </Group>
    <Group title="ウィンドウ" w={48} pad={0}>
      <BigButton $w={47} $off>
        <svg width="22" height="22" viewBox="0 0 22 22">
          <path d="M6.500 1.500h14v8h-14z" fill="#fafafa" stroke="#aaa" />
          <path d="M1.500 6.500h10v6h-10z" fill="#fafafa" stroke="#aaa" />
          <path d="M7.500 11.500h14v9h-14z" fill="#fafafa" stroke="#aaa" />
          <path d="M6 1h15v2H6zM1 6h11v2H1zM7 11h15v2H7z" fill="#aaa" />
        </svg>
        <span>ウィンドウ<br />の切り替え▾</span>
      </BigButton>
    </Group>
  </Ribbon>
);

/* ---------- layer panel ---------- */

const Main = styled.main`
  flex: 1;
  display: grid;
  grid-template-columns: 141px minmax(0, 1fr) 19px;
  column-gap: 1px;
`;
const Panel = styled.aside`
  display: flex;
  flex-direction: column;
  border-right: 1px solid #c8c8c8;
`;
const PanelHead = styled.div`
  display: flex;
  align-items: center;
  gap: 4px;
  height: 12px;
  padding: 0 3px;
  color: #333;
`;
const PanelTitle = styled.h2`
  margin: 0;
  flex: 1;
  font-size: 8px;
  font-weight: 400;
  line-height: 12px;
  color: #3467b0;
`;
const PanelTabs = styled.div`
  display: flex;
  height: 19px;
  background: #f3f3f3;
  border-bottom: 1px solid #c4c4c4;
`;
const PanelTab = styled.button<{ $on?: boolean }>`
  ${plain}
  width: 18px;
  background: #fff;
  border-top: 2px solid ${(p) => (p.$on ? "#2a5caa" : "transparent")};
`;
const LayerTools = styled.div`
  display: flex;
  align-items: center;
  height: 24px;
  gap: 3px;
  padding-left: 1px;
  background: #efefef;
`;
const LayerTool = styled.button<{ $gap?: boolean }>`
  ${plain}
  width: 16px;
  height: 17px;
  margin-left: ${(p) => (p.$gap ? 4 : 0)}px;
  border: 1px solid #aaa;
  border-radius: 2px;
  background: #e9e9e9;
`;
const Tree = styled.ul`
  flex: 1;
  margin: 0;
  padding: 1px 0 0 4px;
  list-style: none;
  border: 1px solid #aaa;
  border-width: 1px 0 0;
  color: #222;
`;
const Node = styled.li<{ $depth: number }>`
  display: flex;
  align-items: center;
  gap: 3px;
  height: 11px;
  padding-left: ${(p) => p.$depth * 12}px;
  font-weight: ${(p) => (p.$depth === 2 ? 700 : 400)};
`;
const Toggle = styled.span`
  display: grid;
  place-items: center;
  width: 6px;
  height: 6px;
  border: 1px solid #aaa;
  &::after { content: ""; width: 2px; height: 1px; background: #555; }
`;
const Branch = styled.span`
  width: 6px;
  height: 6px;
  border: dotted #aaa;
  border-width: 0 0 1px 1px;
`;

const LayerPanel = () => (
  <Panel>
    <PanelHead>
      <Icon name="layerBox" />
      <PanelTitle>レイヤ</PanelTitle>
      <Bare aria-label="メニュー"><Icon name="drop1" size={8} /></Bare>
      <Bare aria-label="固定"><Icon name="pin" size={8} /></Bare>
      <Bare aria-label="閉じる"><Icon name="close" size={9} /></Bare>
    </PanelHead>
    <PanelTabs>
      <PanelTab aria-label="ライブラリ"><Icon name="book" /></PanelTab>
      <PanelTab aria-label="ファミリ"><Icon name="family" /></PanelTab>
      <PanelTab $on aria-label="レイヤ"><Icon name="layerBox" /></PanelTab>
    </PanelTabs>
    <LayerTools>
      <LayerTool aria-label="新規"><Icon name="layerNew" /></LayerTool>
      <LayerTool $gap aria-label="表示"><Icon name="layerOn" /></LayerTool>
      <LayerTool aria-label="非表示"><Icon name="layerOff" /></LayerTool>
      <LayerTool $gap aria-label="移動"><Icon name="layerMove" /></LayerTool>
      <LayerTool $gap aria-label="選択"><Icon name="layerPick" /></LayerTool>
    </LayerTools>
    <Tree>
      <Node $depth={0}><Toggle /><Icon name="sheet" size={11} />Sheet1</Node>
      <Node $depth={1}><Toggle /><Icon name="layers" size={11} />レイヤ</Node>
      <Node $depth={2}><Branch /><Icon name="pencilLayer" size={11} />Default</Node>
    </Tree>
  </Panel>
);

/* ---------- document ---------- */

const Doc = styled.section`
  display: flex;
  flex-direction: column;
  border-left: 1px solid #ddd;
  min-width: 0;
`;
const DocTabs = styled.div`
  display: flex;
  justify-content: space-between;
  height: 15px;
  padding-top: 1px;
  border-bottom: 1px solid #7d9ac8;
`;
const DocTab = styled.button`
  ${plain}
  gap: 3px;
  height: 13px;
  padding: 0 3px;
  margin-left: 1px;
  background: #1f4f9c;
  color: #fff;
`;
const DocNav = styled.div`
  display: flex;
  align-items: center;
  gap: 4px;
  padding-right: 1px;
  font-size: 5px;
  color: #555;
`;
const Canvas = styled.div`
  flex: 1;
  display: flex;
  justify-content: center;
  align-items: flex-start;
  padding-top: 12px;
`;
const SheetArea = styled.div`
  position: relative;
  width: 709px;
`;
const CommandBar = styled.div`
  position: absolute;
  left: -7px;
  top: -13px;
  display: flex;
  align-items: center;
  height: 26px;
  width: 363px;
  padding-left: 1px;
  background: #f3f3f3;
  border: 1px solid #8a8f98;
  border-top: 2px solid #4d6797;
`;
const Cmd = styled.button<{ $tone?: "on" | "blue"; $gap?: boolean; $big?: boolean }>`
  ${plain}
  width: ${(p) => (p.$big ? 26 : 20)}px;
  height: ${(p) => (p.$big ? 22 : 19)}px;
  margin-left: ${(p) => (p.$gap ? 3 : 0)}px;
  border: 1px solid ${(p) => (p.$tone === "on" ? "#d3a35c" : p.$tone === "blue" ? "#a9c3de" : "#d0d0d0")};
  background: ${(p) => (p.$big ? "linear-gradient(#f0a258, #ef9838 50%, #f6ba70)" : p.$tone === "on" ? "#fbc987" : p.$tone === "blue" ? "#e3effa" : "#ececec")};
`;
const CmdSelect = styled.select`
  appearance: none;
  width: 115px;
  height: 16px;
  margin: 0 2px 0 4px;
  padding: 0 2px;
  border: 1px solid #999;
  border-radius: 0;
  color: #222;
  background: linear-gradient(45deg, transparent 50%, #222 50%) 105px 6px / 3px 3px no-repeat,
    linear-gradient(-45deg, transparent 50%, #222 50%) 108px 6px / 3px 3px no-repeat, #eee;
`;
const Radial = styled.div`
  position: absolute;
  left: 149px;
  top: 145px;
`;
const Callout = styled.div`
  position: absolute;
  left: -207px;
  top: 190px;
  pointer-events: none;
`;
const SmallText = styled.text`
  font: 500 4px Roboto, sans-serif;
  fill: #111;
`;
const TealText = styled.text`
  font: 700 5px "Liberation Sans", "Noto Sans CJK JP", sans-serif;
  fill: #18879c;
`;
const BrandText = styled.text`
  font: 400 9px Roboto, sans-serif;
  fill: #222;
`;
const CalloutText = styled.text`
  font: 400 18px "Noto Sans CJK JP", sans-serif;
  font-feature-settings: "palt";
  fill: #1c1010;
`;

const titleLabels: [number, number, string][] = [
  [911, 138, "REVISION HISTORY"], [853, 146, "REV"], [893, 146, "DESCRIPTION"], [954, 146, "DATE"], [979, 146, "APPROVED"],
  [865, 554, "NAME"], [890, 554, "DATE"], [834, 561, "DRAWN"], [834, 568, "CHECKED"], [834, 574, "ENG APPR"], [834, 581, "MGR APPR"],
  [845, 589, "UNLESS OTHERWISE SPECIFIED"], [842, 595, "DIMENSIONS ARE IN MILLIMETERS"], [858, 601, "ANGLES ±X.X°"], [850, 607, "2 PL ±X.XX 3 PL ±X.XXX"],
  [909, 572, "TITLE"], [909, 587, "SIZE"], [911, 593, "A2"], [922, 587, "DWG NO"], [993, 587, "REV"], [909, 607, "SCALE:"], [936, 607, "WEIGHT:"],
];

const Drawing = () => (
  <svg width="709" height="502" viewBox="307 121 709 502" role="img" aria-label="Draft1">
    <path d="M308 622.500h707.500V123" fill="none" stroke="#888" strokeWidth="2" />
    <path d="M307.500 121.500h707v500h-707z" fill="#fff" stroke="#777" />
    <path d="M319 132.500h683.500V609H319z" fill="none" stroke="#111" strokeWidth="1.600" />
    <g fill="none" stroke="#111" strokeWidth="1.200">
      <path d="M659 190L480.500 499h357zM570 344.500h178L659 499z" />
      <path d="M851.500 155v-22M851.500 140.500h151M851.500 147.500h151M862.500 140v15M945.500 140v15M972.500 140v15" />
      <path d="M832.500 609v-60.500h170M832.500 555.500h75M832.500 562.500h75M832.500 569.500h75M832.500 575.500h75M832.500 582.500h170M859.500 549v33M884.500 549v33M907.500 549v60M907.500 568.500h95M907.500 594.500h95M907.500 602.500h95M920.500 582v12M991.500 582v12M934.500 602v7M964.500 602v7" />
    </g>
    <g fill="none" stroke="#777" strokeWidth=".8">
      <path d="M861 557.500h7v4h-7zM864.500 558v4M955 574h7v4h-7zM958.500 574v4M955 588.500h7v4h-7zM958.500 589v4M996 588.500h7v4h-7zM999.500 589v4" />
    </g>
    {titleLabels.map(([x, y, label]) => (
      <SmallText key={`${x}-${y}`} x={x} y={y}>{label}</SmallText>
    ))}
    <TealText x="884" y="562">エラー: 参照はありません</TealText>
    <BrandText x="937" y="562">Solid Edge</BrandText>
    <TealText x="909" y="600">FILE NAME: Draft1</TealText>
    <TealText x="966" y="607">SHEET 1 OF 1</TealText>
  </svg>
);

const radialItems: [string, number, number][] = [
  ["magnifier", 65, 12], ["pan", 103, 27], ["circle", 119, 66], ["pie", 103, 103],
  ["film", 66, 119], ["grayCopy", 27, 103], ["dimension", 11, 66], ["fence", 27, 27],
  ["zoomArea", 65, 33], ["fit", 88, 43], ["line", 98, 66], ["grayCopy", 88, 88],
  ["grayPart", 65, 99], ["flashDim", 33, 66], ["cursor", 43, 43],
];

const RadialMenu = () => (
  <Radial>
    <svg width="132" height="132" viewBox="0 0 132 132">
      <circle cx="66" cy="66" r="43.500" fill="none" stroke="#dfdfdf" strokeOpacity=".78" strokeWidth="44" />
      <circle cx="66" cy="66" r="43" fill="none" stroke="#d4d4d4" strokeDasharray="1 1" />
      {Array.from({ length: 8 }, (_, i) => (
        <path key={i} d="M88 66h43" transform={`rotate(${22.5 + i * 45} 66 66)`} stroke="#d2d2d2" />
      ))}
      <path d="M50 105L26 82l34-16 3 7z" fill="#f5a96c" />
      <circle cx="46" cy="85" r="17" fill="#fbdc12" />
      <path d="M32 92l3 2M36 98l4 2M36 86l4 5M42 95l4 3" stroke="#e6a500" strokeDasharray="1 2" />
      {radialItems.map(([name, x, y], i) => (
        <g key={i} transform={`translate(${x - 6} ${y - 6}) scale(.93)`}>{glyphs[name]}</g>
      ))}
      <circle cx="46" cy="85" r="4.500" fill="none" stroke="#5a4a22" strokeWidth="1.300" />
      <path d="M46 83v13l3-3 2 5 2.500-1-2-5h4z" fill="#fff" stroke="#333" />
    </svg>
  </Radial>
);

const ArrowCallout = () => (
  <Callout>
    <svg width="370" height="180" viewBox="0 0 370 180">
      <defs>
        <filter id="lift" x="-10%" y="-30%" width="120%" height="160%">
          <feDropShadow dx="-2" dy="-4" stdDeviation="5" floodOpacity=".5" />
        </filter>
      </defs>
      <g filter="url(#lift)">
        <g transform="translate(17 130) rotate(-12)">
          <path d="M3 -26H295V-47L333 0L295 47V26H3Z" fill="#faabaa" stroke="#d31405" strokeWidth="6" />
          <CalloutText x="22" y="7">[円を３点で]コマンドを素早く選択</CalloutText>
        </g>
      </g>
    </svg>
  </Callout>
);

const SheetTabs = styled.div`
  display: flex;
  height: 10px;
  background: #c2c2c2;
  border-top: 1px solid #444;
`;
const SheetNav = styled.button`
  ${plain}
  width: 10px;
  height: 9px;
  border: 1px solid #aaa;
  background: #f2f2f2;
  font-size: 5px;
  color: #777;
`;
const SheetTab = styled.button<{ $new?: boolean }>`
  ${plain}
  height: 9px;
  width: ${(p) => (p.$new ? 22 : 36)}px;
  font-size: 7px;
  font-weight: 700;
  color: #111;
  background: ${(p) => (p.$new ? "#fbd9b0" : "#fff")};
  clip-path: ${(p) => (p.$new ? "polygon(20% 0, 100% 0, 80% 100%, 0 100%)" : "polygon(0 0, 100% 0, 88% 100%, 12% 100%)")};
`;
const Prompt = styled.div`
  position: relative;
  display: flex;
  align-items: center;
  gap: 3px;
  height: 16px;
  padding-left: 3px;
  white-space: nowrap;
`;
const PromptName = styled.span`
  width: 52px;
  color: #3467b0;
`;
const PromptText = styled.span`
  flex: 1;
  font-size: 9px;
  color: #111;
`;
const PromptTools = styled.div`
  display: flex;
  align-items: center;
  gap: 2px;
  color: #222;
`;
const FontSize = styled.button<{ $small?: boolean }>`
  ${plain}
  font: 700 ${(p) => (p.$small ? 8 : 10)}px "Liberation Serif", serif;
`;
const Copyright = styled.span`
  position: absolute;
  right: 42px;
  top: -1px;
  font: 7px/12px "Liberation Serif", serif;
  color: #8fa0b8;
`;

const Document = () => (
  <Doc>
    <DocTabs>
      <DocTab><Icon name="docIcon" size={10} />Draft1 <Icon name="close" size={7} /></DocTab>
      <DocNav><span>◁</span><span>▷</span><span>▾</span><Icon name="close" size={7} /></DocNav>
    </DocTabs>
    <Canvas>
      <SheetArea>
        <Drawing />
        <CommandBar>
          <Cmd $big $tone="on" aria-label="選択"><Icon name="cursor" size={18} /></Cmd>
          <Cmd $gap $tone="blue" aria-label="オプション"><Icon name="listPanel" size={14} /></Cmd>
          <CmdSelect aria-label="選択モード"><option>方向のある枠</option></CmdSelect>
          <Cmd $tone="on" aria-label="手前"><Icon name="layerUp" size={14} /></Cmd>
          <Cmd $tone="blue" aria-label="奥"><Icon name="layerDown" size={14} /></Cmd>
          <Cmd $gap $tone="blue" aria-label="クイック選択"><Icon name="flash" size={14} /></Cmd>
          <Cmd $gap $tone="on" aria-label="矩形枠"><Icon name="fenceRect" size={15} /></Cmd>
          <Cmd $tone="blue" aria-label="多角形枠"><Icon name="fencePoly" size={15} /></Cmd>
          <Cmd $gap aria-label="前へ"><Icon name="left" size={12} /></Cmd>
          <Cmd aria-label="次へ"><Icon name="right" size={12} /></Cmd>
          <Cmd $gap aria-label="確定"><Icon name="accept" size={12} /></Cmd>
          <Cmd aria-label="取消"><Icon name="cancel" size={12} /></Cmd>
        </CommandBar>
        <RadialMenu />
        <ArrowCallout />
      </SheetArea>
    </Canvas>
    <SheetTabs>
      {["|◁", "◁", "▷", "▷|"].map((s) => <SheetNav key={s}>{s}</SheetNav>)}
      <SheetTab>Sheet1</SheetTab>
      <SheetTab $new aria-label="新規シート"><Icon name="layerNew" size={9} /></SheetTab>
    </SheetTabs>
    <Prompt>
      <Icon name="keyboard" size={13} />
      <PromptName>プロンプトバー</PromptName>
      <PromptText>要素をクリックして右方向に枠の内側にドラッグし、左方向にドラッグし枠の内側/オーバラップするようにするか、またはAlt+クリックで、多角形枠の最初の頂点を配置します。</PromptText>
      <PromptTools>
        <Arrow />
        <FontSize>A</FontSize>
        <FontSize $small>A</FontSize>
        <span>»</span>
        <Icon name="drop1" size={8} />
        <Icon name="pin" size={8} />
        <Icon name="close" size={9} />
      </PromptTools>
      <Copyright>Copyright(C)2018INTER MESH JAPAN CO.,LTD. All Rights Reserved.</Copyright>
    </Prompt>
  </Doc>
);

/* ---------- side strip and status bar ---------- */

const Strip = styled.aside`
  display: flex;
  flex-direction: column;
  align-items: center;
  gap: 9px;
  padding: 5px 0 0 3px;
  background: #f4f4f4;
`;
const StripLink = styled.a`
  display: flex;
  flex-direction: column;
  align-items: center;
  gap: 2px;
  color: #3263ae;
  text-decoration: none;
`;
const Vertical = styled.span`
  writing-mode: vertical-rl;
  text-orientation: sideways;
  line-height: 10px;
  font-size: 7px;
`;
const Status = styled.footer`
  display: flex;
  align-items: center;
  justify-content: flex-end;
  gap: 3px;
  height: 14px;
  padding-right: 2px;
  background: #2256a0;
`;
const Search = styled.input`
  width: 88px;
  height: 12px;
  padding: 0 1px;
  border: 0;
  background: #fff;
  &::placeholder { color: #aaa; opacity: 1; }
`;
const Zoom = styled.input`
  appearance: none;
  width: 65px;
  height: 12px;
  margin: 0;
  background: linear-gradient(#d5e2f5, #d5e2f5) center / 100% 1px no-repeat;
  &::-webkit-slider-thumb {
    appearance: none;
    width: 7px;
    height: 9px;
    border: 1px solid #dce8f8;
    border-radius: 1px 1px 4px 4px;
    background: #5d86c4;
  }
`;

export default function App() {
  return (
    <Shell>
      <Global />
      <Header>
        <AppButton aria-label="Solid Edge">
          <svg width="18" height="18" viewBox="0 0 18 18">
            <path d="M2 5l14-1-8 12z" fill="#6cb2e4" />
            <path d="M2 5l6 4v7zM16 4L8 9l3 3z" fill="#2373b8" />
            <path d="M2 5l6 4 8-5z" fill="#b5dcf4" />
          </svg>
        </AppButton>
        <HeaderRows>
          <TitleRow>
            <QuickAccess>
              <Bare aria-label="保存"><Icon name="save" /></Bare>
              <Bare aria-label="元に戻す"><Icon name="undo" size={13} /></Bare>
              <Arrow />
              <Bare aria-label="やり直し"><Icon name="redo" /></Bare>
              <Arrow />
              <Bare aria-label="カスタマイズ"><Icon name="drop1" size={8} /></Bare>
            </QuickAccess>
            <Title>Solid Edge 2D Drafting ST10 - Draft - [Draft1]</Title>
            <WindowButtons $faint>
              <Bare aria-label="最小化"><Icon name="minimize" size={9} /></Bare>
              <Bare aria-label="元のサイズ"><Icon name="restore" size={9} /></Bare>
              <Bare aria-label="閉じる"><Icon name="close" size={9} /></Bare>
            </WindowButtons>
          </TitleRow>
          <TabRow>
            <Tabs>
              <Tab $on>ホーム</Tab>
              <Tab $wide>テーブル</Tab>
              <Tab>検査</Tab>
              <Tab>ツール</Tab>
              <Tab>表示</Tab>
            </Tabs>
            <WindowButtons>
              <Bare aria-label="ヘルプ"><Icon name="help" size={10} /></Bare>
              <Bare aria-label="重ねて表示"><Icon name="cascade" size={10} /></Bare>
              <Bare aria-label="並べて表示"><Icon name="cascadeBack" size={10} /></Bare>
              <Bare aria-label="最小化"><Icon name="minimize" size={8} /></Bare>
              <Bare aria-label="元のサイズ"><Icon name="restore" size={8} /></Bare>
              <Bare aria-label="閉じる"><Icon name="close" size={8} /></Bare>
            </WindowButtons>
          </TabRow>
        </HeaderRows>
      </Header>
      <RibbonBar />
      <Main>
        <LayerPanel />
        <Document />
        <Strip>
          <StripLink href="#help" aria-label="ヘルプ"><Icon name="helpRound" size={11} /></StripLink>
          <StripLink href="#youtube" aria-label="YouTube"><Icon name="youtube" size={12} /></StripLink>
          <StripLink href="#facebook" aria-label="Facebook"><Icon name="facebook" size={11} /></StripLink>
          <StripLink href="#community">
            <Icon name="community" size={12} />
            <Vertical>Solid Edgeコミュニティ</Vertical>
          </StripLink>
        </Strip>
      </Main>
      <Status>
        <Search aria-label="コマンドを検索" placeholder="コマンドを検索" />
        {["go", "zoomArea", "barMagnifier", "zoomBack", "fit", "pan", "minus"].map((n) => (
          <Bare key={n} aria-label={n}><Icon name={n} size={11} /></Bare>
        ))}
        <Zoom type="range" aria-label="ズーム" defaultValue={46} />
        {["add", "record", "upload"].map((n) => (
          <Bare key={n} aria-label={n}><Icon name={n} size={12} /></Bare>
        ))}
      </Status>
    </Shell>
  );
}
